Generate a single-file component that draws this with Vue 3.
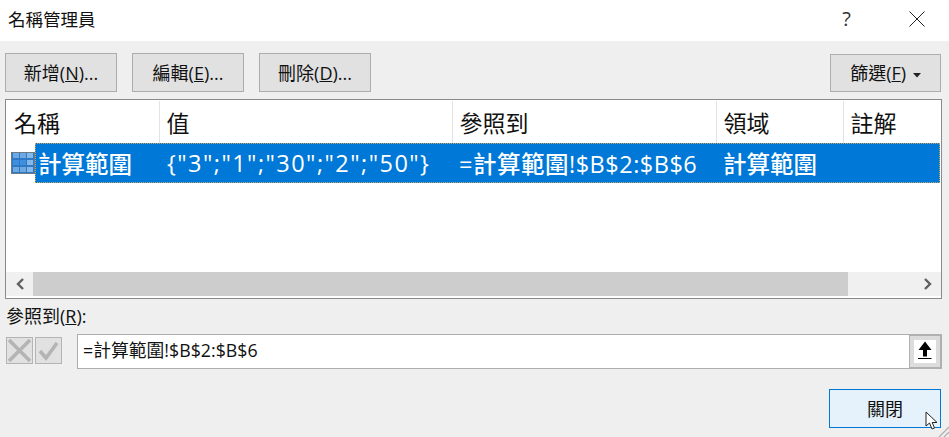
<template>
  <div class="dialog">
    <div class="title-bar">
      <span class="title">名稱管理員</span>
      <div class="title-actions">
        <span class="help">?</span>
        <svg class="close-icon" width="16" height="16" viewBox="0 0 16 16">
          <path d="M0.5 0.5L15.5 15.5M15.5 0.5L0.5 15.5" stroke="#222" stroke-width="1" fill="none" />
        </svg>
      </div>
    </div>

    <div class="body">
      <div class="toolbar">
        <button v-for="btn in actions" :key="btn.label" class="btn">
          {{ btn.label }}(<u>{{ btn.key }}</u>)...
        </button>
        <button class="btn filter-btn">
          篩選(<u>F</u>)
          <svg width="8" height="5" viewBox="0 0 8 5"><path d="M0 0H8L4 4.5Z" fill="#222" /></svg>
        </button>
      </div>

      <div class="list">
        <div class="list-head">
          <div v-for="col in columns" :key="col.name" class="head-cell" :style="{ width: col.width + 'px' }">
            {{ col.name }}
          </div>
        </div>
        <div class="list-row">
          <svg class="range-icon" width="24" height="22" viewBox="0 0 24 22">
            <rect width="24" height="22" fill="#6d7b86" />
            <rect x="1" y="1" width="22" height="20" fill="#2f78c4" />
            <rect v-for="cell in iconCells" :key="cell.x + '-' + cell.y" :x="cell.x" :y="cell.y" width="6" height="5" :fill="cell.fill" />
          </svg>
          <div class="row-selected">
            <span class="cell name-cell">計算範圍</span>
            <span class="cell value-cell">{"3";"1";"30";"2";"50"}</span>
            <span class="cell ref-cell">=計算範圍!$B$2:$B$6</span>
            <span class="cell">計算範圍</span>
          </div>
        </div>
        <div class="list-space"></div>
        <div class="scrollbar">
          <div class="arrow">
            <svg width="10" height="12" viewBox="0 0 10 12"><path d="M8 1L3 6L8 11" stroke="#606060" stroke-width="2.4" fill="none" /></svg>
          </div>
          <div class="thumb"></div>
          <div class="track"></div>
          <div class="arrow">
            <svg width="10" height="12" viewBox="0 0 10 12"><path d="M2 1L7 6L2 11" stroke="#606060" stroke-width="2.4" fill="none" /></svg>
          </div>
        </div>
      </div>

      <div class="ref-label">參照到(<u>R</u>):</div>

      <div class="ref-row">
        <div class="mini-btn">
          <svg width="25" height="25" viewBox="0 0 25 25"><path d="M2 2L23 23M23 2L2 23" stroke="#b4b4b4" stroke-width="3.6" fill="none" /></svg>
        </div>
        <div class="mini-btn">
          <svg width="25" height="25" viewBox="0 0 25 25"><path d="M4 13L10 20L21 5" stroke="#b4b4b4" stroke-width="3.6" fill="none" /></svg>
        </div>
        <div class="ref-input">
          <span class="ref-text">=計算範圍!$B$2:$B$6</span>
          <div class="collapse-btn">
            <svg width="22" height="23" viewBox="0 0 22 23">
              <rect width="22" height="23" fill="#fff" />
              <path d="M11 1.5L17.5 10H13V16.5H9V10H4.5Z" fill="#000" />
              <path d="M4 18.5H17.5" stroke="#000" stroke-width="1" />
            </svg>
          </div>
        </div>
      </div>

      <div class="footer">
        <button class="btn close-btn">關閉</button>
      </div>
    </div>

    <svg class="cursor" width="14" height="20" viewBox="0 0 14 20">
      <path d="M1 1V15L4.5 12L7 18L9.5 17L7.2 11.5H12Z" fill="#fff" stroke="#222" stroke-width="1" />
    </svg>
    <svg class="grip" width="12" height="12" viewBox="0 0 12 12">
      <path d="M12 2L2 12M12 7L7 12" stroke="#b0b0b0" stroke-width="1.3" fill="none" />
    </svg>
  </div>
</template>

<script setup>
const actions = [
  { label: '新增', key: 'N' },
  { label: '編輯', key: 'E' },
  { label: '刪除', key: 'D' }
]

const columns = [
  { name: '名稱', width: 154 },
  { name: '值', width: 293 },
  { name: '參照到', width: 264 },
  { name: '領域', width: 127 },
  { name: '註解', width: 98 }
]

// small table glyph next to the name: middle row is darker, right column lighter
const iconCells = []
for (const [row, y] of [1, 8, 15].entries()) {
  for (const [col, x] of [2, 9, 16].entries()) {
    let fill = '#6fa9e2'
    if (row === 1 && col < 2) fill = '#3f8fdf'
    if (col === 2) fill = '#84b8e8'
    iconCells.push({ x, y, fill })
  }
}
</script>

<style>
html,
body {
  margin: 0;
  background: #f0f0f0;
}
</style>

<style scoped>
.dialog {
  position: relative;
  width: 949px;
  height: 437px;
  overflow: hidden;
  background: #efefef;
  color: #111;
  font-family: "Open Sans", "Noto Sans CJK TC", sans-serif;
  font-size: 18px;
}

.title-bar {
  height: 41px;
  box-sizing: border-box;
  background: #fff;
  display: flex;
  justify-content: space-between;
  align-items: center;
  padding: 0 24px 4px 8px;
}

.title {
  font-size: 17.5px;
}

.title-actions {
  display: flex;
  align-items: center;
  gap: 58px;
}

.help {
  font-size: 20px;
  line-height: 1;
  color: #333;
}

.close-icon {
  display: block;
}

.body {
  padding: 12px 7px 0 5px;
}

.toolbar {
  display: flex;
  gap: 15px;
  height: 39px;
}

.btn {
  width: 112px;
  height: 39px;
  padding: 0;
  background: #e1e1e1;
  border: 1px solid #adadad;
  color: #111;
  font: inherit;
  line-height: 1;
  box-sizing: border-box;
}

.filter-btn {
  margin-left: auto;
  margin-right: 1px;
  margin-top: 1px;
  height: 38px;
  width: 111px;
}

.filter-btn svg {
  margin-left: 2px;
  vertical-align: middle;
}

.list {
  margin-top: 7px;
  height: 200px;
  box-sizing: border-box;
  border: 1px solid #8a8a8a;
  background: #fff;
  display: flex;
  flex-direction: column;
}

.list-head {
  display: flex;
  height: 43px;
  flex: none;
}

.head-cell {
  flex: none;
  box-sizing: border-box;
  padding-left: 6.5px;
  font-size: 23px;
  line-height: 44px;
  border-right: 1px solid #e3e3e3;
  margin-top: 1px;
  height: 42px;
}

.head-cell:first-child {
  padding-left: 8px;
}

.head-cell:last-child {
  border-right: none;
}

.list-row {
  display: flex;
  align-items: center;
  height: 40px;
  flex: none;
  padding: 0 1px 0 5px;
}

.range-icon {
  flex: none;
}

.row-selected {
  flex: 1;
  height: 40px;
  box-sizing: border-box;
  background: #0078d7;
  border: 1px dotted #c9a468;
  color: #fff;
  display: flex;
  align-items: center;
  font-size: 23.5px;
  font-weight: 500;
  padding-left: 2px;
}

.cell {
  flex: none;
  white-space: nowrap;
}

.name-cell {
  width: 129px;
}

.value-cell {
  width: 292px;
  letter-spacing: 1.45px;
}

.ref-cell {
  width: 264px;
  letter-spacing: 0.5px;
}

.list-space {
  flex: 1;
}

.scrollbar {
  display: flex;
  height: 24px;
  flex: none;
  margin-bottom: 2px;
  background: #f0f0f0;
}

.arrow {
  width: 27px;
  flex: none;
  display: flex;
  align-items: center;
  justify-content: center;
}

.thumb {
  width: 815px;
  background: #cdcdcd;
}

.track {
  flex: 1;
}

.ref-label {
  margin: 7px 0 0 1px;
  height: 21px;
  line-height: 21px;
}

.ref-row {
  display: flex;
  align-items: flex-start;
  margin-top: 7px;
}

.mini-btn {
  width: 27px;
  height: 27px;
  box-sizing: border-box;
  margin: 3px 2px 0 0;
  background: #e1e1e1;
  border: 1px solid #b4b4b4;
  display: flex;
  align-items: center;
  justify-content: center;
}

.mini-btn:first-child {
  margin-left: 1px;
}

.ref-input {
  margin-left: 13px;
  flex: 1;
  height: 35px;
  box-sizing: border-box;
  border: 1px solid #adadad;
  background: #fff;
  display: flex;
  align-items: center;
  justify-content: space-between;
}

.ref-text {
  padding: 0 0 6px 5px;
  font-size: 17.8px;
}

.collapse-btn {
  width: 33px;
  height: 35px;
  margin: -1px -1px -1px 0;
  box-sizing: border-box;
  background: #dcdcdc;
  border: 2px solid #b0b0b0;
  border-left-width: 1px;
  display: flex;
  align-items: center;
  justify-content: center;
}

.footer {
  display: flex;
  justify-content: flex-end;
  margin-top: 20px;
  padding-right: 1px;
}

.close-btn {
  background: #e5f1fb;
  border-color: #0078d7;
}

.cursor {
  position: absolute;
  left: 925px;
  top: 411px;
}

.grip {
  position: absolute;
  right: 0;
  bottom: 0;
}
</style>
